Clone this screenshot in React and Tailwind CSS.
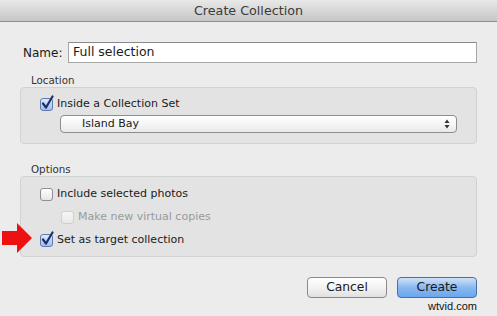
import React from "react";

const font = { fontFamily: '"DejaVu Sans", "Liberation Sans", sans-serif' };

function Check({ checked, disabled }) {
  return (
    <span className="relative inline-block w-[13px] h-[13px] shrink-0">
      <span
        className={
          "absolute inset-0 rounded-[3px] border " +
          (checked
            ? "border-[#5d7bb0] bg-gradient-to-b from-[#dfeafa] to-[#9fc0ea]"
            : disabled
            ? "border-[#cfcfcf] bg-gradient-to-b from-[#f6f6f6] to-[#e8e8e8]"
            : "border-[#8e8e8e] bg-gradient-to-b from-[#ffffff] to-[#e6e6e6]")
        }
      />
      {checked && (
        <svg className="absolute left-[1px] top-[-3px]" width="13" height="15" viewBox="0 0 13 15">
          <path d="M2 8.5 L5 12.5 L11.5 1.5" fill="none" stroke="#1f2f6a" strokeWidth="2.2" strokeLinecap="round" strokeLinejoin="round" />
        </svg>
      )}
    </span>
  );
}

export default function App() {
  return (
    <div className="relative w-[497px] h-[316px] bg-[#ececec] text-[11px] text-[#1a1a1a] overflow-hidden" style={font}>
      {/* title bar */}
      <div className="h-[22px] flex items-center justify-center bg-gradient-to-b from-[#e9e9e9] to-[#c6c6c6] border-b border-[#8f8f8f] text-[12.7px] text-[#3a3a3a]">
        Create Collection
      </div>

      <div className="px-[20px]">
        {/* name */}
        <div className="mt-[20px] flex items-center h-[21px]">
          <span className="pl-[3px] w-[48px] text-[12px]">Name:</span>
          <div className="flex-1 h-[21px] bg-white border border-[#a6a6a6] border-t-[#8a8a8a] flex items-center px-[4px] text-[12.5px]">
            Full selection
          </div>
        </div>

        {/* location */}
        <div className="mt-[10px] pl-[11px] h-[14px] leading-[14px] text-[10.3px] text-[#333]">Location</div>
        <div className="h-[57px] rounded-[4px] border border-[#d2d2d2] bg-[#e3e3e3] pt-[10px] pl-[19px] pr-[19px]">
          <div className="flex items-center gap-[4px] h-[13px]">
            <Check checked />
            <span>Inside a Collection Set</span>
          </div>
          <div className="mt-[4px] ml-[20px] h-[18px] rounded-[4px] border border-[#8e8e8e] bg-gradient-to-b from-[#ffffff] via-[#f6f6f6] to-[#e8e8e8] flex items-center justify-between pl-[21px] pr-[6px] text-[11px]">
            <span>Island Bay</span>
            <svg width="6" height="10" viewBox="0 0 6 10">
              <path d="M3 0.5 L5.5 4 L0.5 4 Z" fill="#333" />
              <path d="M3 9.5 L5.5 6 L0.5 6 Z" fill="#333" />
            </svg>
          </div>
        </div>

        {/* options */}
        <div className="mt-[18px] pl-[11px] h-[14px] leading-[14px] text-[10.3px] text-[#333]">Options</div>
        <div className="h-[81px] rounded-[4px] border border-[#d2d2d2] bg-[#e3e3e3] pt-[11px] pl-[19px]">
          <div className="flex items-center gap-[4px] h-[13px]">
            <Check />
            <span>Include selected photos</span>
          </div>
          <div className="mt-[10px] ml-[21px] flex items-center gap-[4px] h-[13px] text-[#9a9a9a]">
            <Check disabled />
            <span>Make new virtual copies</span>
          </div>
          <div className="mt-[10px] flex items-center gap-[4px] h-[13px]">
            <Check checked />
            <span>Set as target collection</span>
          </div>
        </div>

        {/* buttons */}
        <div className="mt-[20px] flex justify-end gap-[10px]">
          <div className="w-[80px] h-[21px] rounded-[4px] border border-[#8a8a8a] bg-gradient-to-b from-[#ffffff] via-[#f3f3f3] to-[#e0e0e0] flex items-center justify-center text-[12.3px]">
            Cancel
          </div>
          <div className="w-[80px] h-[21px] rounded-[4px] border border-[#4a6ea8] bg-gradient-to-b from-[#cfe2fa] via-[#8ab8f0] to-[#6aa6ee] flex items-center justify-center text-[12.3px]">
            Create
          </div>
        </div>
        <div className="mt-[2px] text-right text-[11px] leading-[12px] text-[#111]" style={{ fontFamily: '"Liberation Sans", sans-serif' }}>
          wtvid.com
        </div>
      </div>

      {/* red arrow */}
      <svg className="absolute left-0 top-[222px]" width="34" height="32" viewBox="0 0 34 32">
        <path d="M2 9 L17 9 L17 1 L32 16 L17 31 L17 23 L2 23 Z" fill="#ee1111" />
      </svg>
    </div>
  );
}
